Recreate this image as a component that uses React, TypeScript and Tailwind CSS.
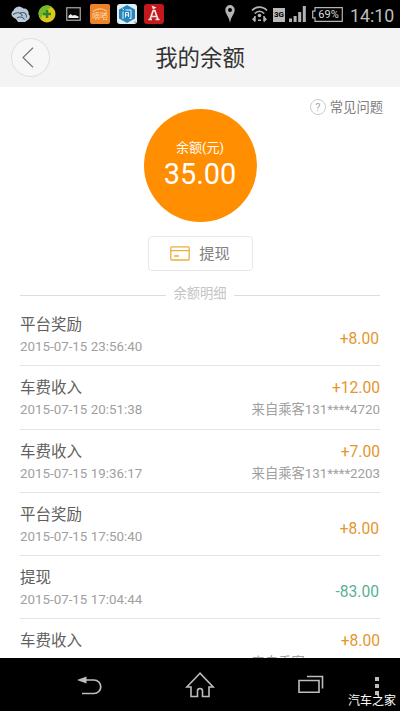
type Entry = {
  title: string;
  time: string;
  amount: string;
  from?: string;
};

const entries: Entry[] = [
  { title: "平台奖励", time: "2015-07-15 23:56:40", amount: "+8.00" },
  { title: "车费收入", time: "2015-07-15 20:51:38", amount: "+12.00", from: "来自乘客131****4720" },
  { title: "车费收入", time: "2015-07-15 19:36:17", amount: "+7.00", from: "来自乘客131****2203" },
  { title: "平台奖励", time: "2015-07-15 17:50:40", amount: "+8.00" },
  { title: "提现", time: "2015-07-15 17:04:44", amount: "-83.00" },
  { title: "车费收入", time: "2015-07-15 16:41:20", amount: "+8.00", from: "来自乘客131****2479" },
];

function StatusBar() {
  return (
    <div className="flex h-7 shrink-0 items-center bg-black text-[#b4b4b4]">
      {/* Уведомления */}
      <svg className="ml-[10px]" width="21" height="18" viewBox="0 0 21 18">
        <path d="M3.500 12.500a4 4 0 0 1 0-7A6 6 0 0 1 13.500 3.500 4.500 4.500 0 0 1 18.500 9a3.500 3.500 0 0 1 0 5.500L15 17H8l-2-3z" fill="#b9c9da" />
        <path d="M3 9.500c4-3 8-2 9.500 1.500M7 13c3-2 6-1 7.500 1.500M10 8c4-1.500 7 .5 6.500 4.500" fill="none" stroke="#4c5a66" strokeWidth="1.100" />
      </svg>
      <svg className="ml-[7px]" width="18" height="18" viewBox="0 0 18 18">
        <circle cx="9" cy="9" r="8.500" fill="#d9c61f" />
        <path d="M1 6a8.500 8.500 0 0 1 13-4C10 4 5 7 3 14A8.500 8.500 0 0 1 1 6z" fill="#73b82d" />
        <path d="M9 5v8M5 9h8" stroke="#2f8427" strokeWidth="2.600" />
      </svg>
      <svg className="ml-[10px]" width="15" height="14" viewBox="0 0 15 14">
        <rect x=".75" y=".75" width="13.500" height="12.500" fill="#080808" stroke="#aaa" strokeWidth="1.200" />
        <path d="M2.500 11V9l2-2 2 1.500L9 8l3.500 1.500V11z" fill="#eee" />
      </svg>
      <div className="ml-[9px] flex h-5 w-5 flex-col items-center justify-center rounded-[2px] bg-[#ee8328] text-[#ffd9a8]">
        <svg width="16" height="4" viewBox="0 0 16 4" fill="none" stroke="currentColor">
          <path d="M1 3.500c4-3 9-4 14 0" />
        </svg>
        <span className="text-[8px] leading-[9px]">嘀嗒</span>
      </div>
      <div className="ml-[7px] h-5 w-5">
        <svg width="20" height="20" viewBox="0 0 20 20">
          <rect width="20" height="20" rx="3" fill="#e1eef4" />
          <path d="M10 1l8 4.500v9L10 19l-8-4.500v-9z" fill="#2488bd" />
          <path d="M6 7.500V15M5.500 4.500L7 6M8.500 6H14v8.500h-1.500M8.500 8.500h3M8.500 11h3M8.500 8.500v5M11.500 8.500v4.500" fill="none" stroke="#fff" strokeWidth=".9" />
          <circle cx="18" cy="18" r="1" fill="#e89b50" />
        </svg>
      </div>
      <div className="ml-[7px] h-5 w-5">
        <svg width="20" height="20" viewBox="0 0 20 20">
          <rect width="20" height="20" rx="3" fill="#c3181c" />
          <path d="M6 15.500L9.200 6.500h1.600L14 15.500M7.500 12.500h5M4.500 15.500H8M11.500 15.500h4" fill="none" stroke="#f7e6e2" strokeWidth="1.700" />
          <path d="M7.500 1.500l5 2-3.500 2z" fill="#f7e6e2" />
        </svg>
      </div>

      <svg className="ml-[61px]" width="10" height="18" viewBox="0 0 10 18">
        <path d="M5 0a4.700 4.700 0 0 1 4.700 4.700C9.700 9 6 11 5 18 4 11 .3 9 .3 4.700A4.700 4.700 0 0 1 5 0zM5 3a2 2 0 1 0 0 4 2 2 0 0 0 0-4z" fill="currentColor" fillRule="evenodd" />
      </svg>
      <svg className="ml-4" width="17" height="16" viewBox="0 0 17 16" fill="none" stroke="currentColor" strokeWidth="1.700">
        <path d="M1 4.500c4-4.500 11-4.500 15 0M3.800 7.500c3-3 6.500-3 9.400 0" />
        <circle cx="8.500" cy="9.500" r="1.800" fill="currentColor" stroke="none" />
        <path d="M1 13.200l3-3v6zM5 10.500v5.400M16 13.200l-3-3v6zM12 10.500v5.400" fill="currentColor" stroke="none" />
        <path d="M4 10v5.500M13 10v5.500M7 14.200h3" strokeWidth="1.500" />
      </svg>
      <div className="mt-[2px] ml-[5px] flex h-[14px] w-3 items-center justify-center bg-[#b9b9b9] font-[Roboto,sans-serif] text-[8px] leading-none font-bold text-black">3G</div>
      <svg className="ml-1" width="17" height="16" viewBox="0 0 17 16" fill="currentColor">
        <path d="M0 12.500h3V16H0zM4.600 10h3v6h-3zM9.200 6h3v10h-3zM13.800 0h3v16h-3z" />
      </svg>
      <div className="relative ml-[6px] h-[15px] w-[31px]">
        <svg width="31" height="15" viewBox="0 0 31 15" fill="none" stroke="currentColor" strokeWidth="1.200">
          <path d="M3 .7h27.300v13.600H3v-3.500H.7V4.200H3z" />
        </svg>
        <span className="absolute inset-0 pl-[2px] text-center font-[Roboto,sans-serif] text-[11px] leading-[15px] text-[#ddd]">69%</span>
      </div>
      <span className="mt-[3px] ml-[7px] font-[Roboto,sans-serif] text-[17.800px] leading-none text-[#bebebe]">14:10</span>
    </div>
  );
}

function NavBar() {
  return (
    <div className="relative flex h-[53px] shrink-0 bg-black text-[#bdbdbd]">
      <svg className="mt-[17px] ml-[77px]" width="26" height="20" viewBox="0 0 26 20">
        <path d="M8 5h9a6.700 6.700 0 0 1 0 13.500H5" fill="none" stroke="currentColor" strokeWidth="1.700" />
        <path d="M0 5l9.500-3.500v7z" fill="currentColor" />
      </svg>
      <svg className="mt-[14px] ml-[82px]" width="30" height="26" viewBox="0 0 30 26" fill="none" stroke="currentColor" strokeWidth="1.600">
        <path d="M15 1.200L1.800 15H6v9.500h6.500V19a2.500 2.500 0 0 1 5 0v5.500H24V15h4.200z" />
      </svg>
      <svg className="mt-[17px] ml-[83px]" width="26" height="19" viewBox="0 0 26 19" fill="none" stroke="currentColor" strokeWidth="1.600">
        <path d="M1 5.500h20v11.700H1zM9 1.500h15.500v12" />
      </svg>
      <div className="mt-[19px] ml-[51px] flex flex-col gap-[3px]">
        <i className="h-1 w-1 bg-current" />
        <i className="h-1 w-1 bg-current" />
        <i className="h-1 w-1 bg-current" />
      </div>
      <span className="absolute right-[4px] bottom-[3px] text-[12px] leading-[14px] text-white">汽车之家</span>
    </div>
  );
}

function EntryRow({ entry }: { entry: Entry }) {
  return (
    <li className="flex h-[63.300px] shrink-0 justify-between border-b border-[#e4e4e4]">
      <div className="flex flex-col pt-[10px]">
        <span className="text-[15.500px] leading-[24px] text-[#606060]">{entry.title}</span>
        <span className="font-[Roboto,sans-serif] text-[13.350px] leading-[20px] text-[#a0a0a0]">{entry.time}</span>
      </div>
      <div className={entry.from ? "flex flex-col items-end pt-[10px]" : "flex flex-col items-end pt-[24px] pr-px"}>
        <span
          className={`font-[Roboto,sans-serif] text-[15.600px] leading-[24px] ${
            entry.amount.startsWith("-") ? "text-[#5bb094]" : "text-[#e5952c]"
          }`}
        >
          {entry.amount}
        </span>
        {entry.from && <span className="text-[13.300px] leading-[20px] text-[#a0a0a0]">{entry.from}</span>}
      </div>
    </li>
  );
}

export default function App() {
  return (
    <div className="flex h-[711px] w-[400px] flex-col overflow-hidden bg-white font-[Roboto,'Noto_Sans_CJK_SC',sans-serif]">
      <StatusBar />

      <header className="grid h-[59px] shrink-0 grid-cols-[1fr_auto_1fr] items-center bg-[#f4f4f4]">
        <button className="ml-[11px] flex h-[39px] w-[39px] items-center justify-center rounded-full border border-[#dedede] bg-[#f7f7f7]">
          <svg className="mr-[6px]" width="12" height="21" viewBox="0 0 12 21" fill="none" stroke="#777" strokeWidth="1.200">
            <path d="M11 .7L1 10.500l10 9.800" />
          </svg>
        </button>
        <h1 className="text-[22.400px] leading-[32px] text-[#333]">我的余额</h1>
      </header>

      <main className="flex min-h-0 flex-1 flex-col overflow-hidden">
        <div className="mt-[10px] mr-[17px] flex h-5 shrink-0 items-center justify-end gap-1">
          <span className="flex h-4 w-4 items-center justify-center rounded-full border border-[#ccc] text-[11px] leading-none text-[#aaa]">?</span>
          <span className="pt-px text-[13.300px] leading-[20px] text-[#808080]">常见问题</span>
        </div>

        <div className="-mt-2 flex h-[113px] w-[113px] shrink-0 flex-col items-center self-center rounded-full bg-[#ff8e00] pt-[29px] text-white">
          <span className="text-[13px] leading-[20px]">余额(元)</span>
          <span className="text-[28.900px] leading-[33px]">35.00</span>
        </div>

        <button className="mt-[14px] flex h-[35px] w-[105px] shrink-0 items-center justify-center gap-[9px] self-center rounded-[4px] border border-[#e8e8e8]">
          <svg width="20" height="15" viewBox="0 0 20 15" fill="none" stroke="#ecae3f" strokeWidth="1.300">
            <rect x=".8" y=".8" width="18.400" height="13.200" rx="1" />
            <path d="M1 4.700h18M4 10h5" />
          </svg>
          <span className="text-[15.300px] leading-[24px] text-[#808080]">提现</span>
        </button>

        <div className="mt-[13px] flex h-5 shrink-0 items-center gap-[7px] px-5 text-[#c4c4c4]">
          <div className="mt-[2px] h-px flex-1 bg-[#ddd]" />
          <span className="text-[13.300px] leading-[20px]">余额明细</span>
          <div className="mt-[2px] h-px flex-1 bg-[#ddd]" />
        </div>

        <ul className="mt-[-1px] flex flex-col px-5">
          {entries.map((entry) => (
            <EntryRow key={entry.time} entry={entry} />
          ))}
        </ul>
      </main>

      <NavBar />
    </div>
  );
}
